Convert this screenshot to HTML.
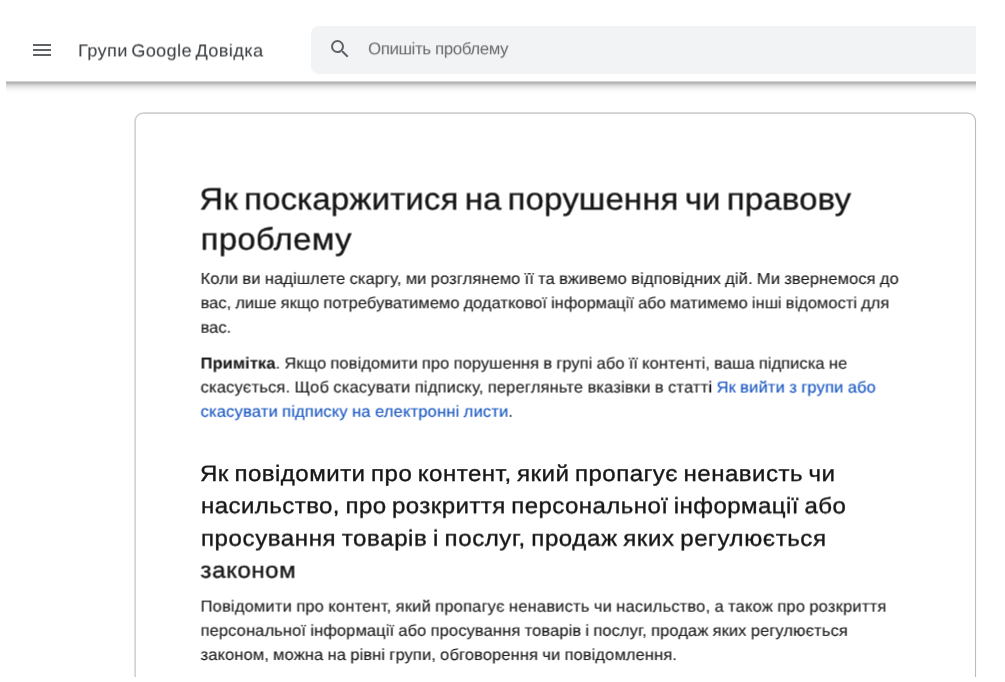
<!doctype html>
<html lang="uk"><head><meta charset="utf-8"><title>Як поскаржитися на порушення чи правову проблему</title>
<style>
html,body{margin:0;padding:0;background:#fff;}
h1,h2,p,header,main,article{margin:0;padding:0;font:inherit;display:block;}
body{width:1005px;height:682px;position:relative;overflow:hidden;font-family:"Liberation Sans", Arial, sans-serif;color:#1f1f1f;}
.l{display:block;position:absolute;white-space:pre;line-height:1;margin:0;padding:0;font-weight:400;will-change:transform;transform-origin:0 50%;text-rendering:geometricPrecision;}
.l a{color:#1857c2;text-decoration:none;}
.l b{font-weight:700;}
.hd{color:#3b3e41;-webkit-text-stroke:0.06px #3b3e41;}
.ph{color:#686a6d;}
.h{color:#161616;-webkit-text-stroke:0.35px #161616;}
.p{color:#1a1a1a;-webkit-text-stroke:0.12px #1a1a1a;}
.p a{-webkit-text-stroke:0.12px #1857c2;}
.shadow{position:absolute;left:6px;top:81px;width:970px;height:12px;background:linear-gradient(to bottom,#d8d8d8 0,#d4d4d4 .5px,#b0b0b0 1.5px,#bfbfbf 2.5px,#cacaca 3.5px,#d9d9d9 4.5px,#e3e3e3 5.5px,#ebebeb 6.5px,#f1f1f1 7.5px,#f6f6f6 8.5px,#f9f9f9 9.5px,#fcfcfc 10.5px,#fefefe 11.5px,#fff 12px);}
.search{position:absolute;left:311px;top:25.5px;width:665px;height:48.3px;background:#f1f3f4;border-radius:8px 0 0 8px;}
.clipb{position:absolute;left:0;top:677px;width:1005px;height:5px;background:#fff;}
svg{position:absolute;}
</style></head>
<body>
<div class="shadow"></div>
<div class="search"></div>
<svg style="left:29.9px;top:37.6px" width="24" height="24" viewBox="0 0 24 24"><path fill="#5f6368" d="M3 18h18v-2H3v2zm0-5h18v-2H3v2zm0-7v2h18V6H3z"/></svg>
<svg style="left:328.1px;top:37.4px" width="24" height="24" viewBox="0 0 24 24"><path fill="#5f6368" d="M15.5 14h-.79l-.28-.27A6.471 6.471 0 0 0 16 9.5 6.5 6.5 0 1 0 9.5 16c1.61 0 3.09-.59 4.23-1.57l.27.28v.79l5 4.99L20.49 19l-4.99-5zm-6 0C7.01 14 5 11.99 5 9.5S7.01 5 9.500 5 14 7.010 14 9.500 11.990 14 9.500 14z"/></svg>
<svg style="left:0;top:0" width="1005" height="682" viewBox="0 0 1005 682" fill="none"><path d="M135.15 678V121.1a8 8 0 0 1 8-8H967.5" stroke="#cfd0d2" stroke-width="1.6"/><path d="M967.5 113.1a8 8 0 0 1 8 8V678" stroke="#bcbcbc" stroke-width="1.1"/></svg>
<div class="clipb"></div>
<header>
<span class="l hd" style="font-size:17.4px;left:78px;top:42px;letter-spacing:0.418px;word-spacing:-2.0px;transform:translate(0.10px,0.45px) rotate(0.01deg) scaleX(1.04)">Групи Google Довідка</span>
<div class="searchbox">
<span class="l ph" style="font-size:16.8px;left:368px;top:41px;letter-spacing:-0.344px;word-spacing:0px;transform:translate(0.10px,0.30px) rotate(0.01deg) scaleX(1.0)">Опишіть проблему</span>
</div>
</header>
<main>
<article>
<h1>
<span class="l h" style="font-size:31.0px;left:199px;top:183px;letter-spacing:0.192px;word-spacing:-3.0px;transform:translate(0.40px,0.48px) rotate(0.01deg) scaleX(1.06)">Як поскаржитися на порушення чи правову</span>
<span class="l h" style="font-size:31.0px;left:200px;top:223px;letter-spacing:0.319px;word-spacing:-3.0px;transform:translate(0.60px,0.63px) rotate(0.01deg) scaleX(1.06)">проблему</span>
</h1>
<p>
<span class="l p" style="font-size:16.0px;left:200px;top:271px;letter-spacing:0.108px;word-spacing:-0.5px;transform:translate(0.60px,0.91px) rotate(0.01deg) scaleX(1.03)">Коли ви надішлете скаргу, ми розглянемо її та вживемо відповідних дій. Ми звернемося до</span>
<span class="l p" style="font-size:16.0px;left:200px;top:296px;letter-spacing:0.012px;word-spacing:-0.5px;transform:translate(0.60px,0.21px) rotate(0.01deg) scaleX(1.03)">вас, лише якщо потребуватимемо додаткової інформації або матимемо інші відомості для</span>
<span class="l p" style="font-size:16.0px;left:200px;top:320px;letter-spacing:0.012px;word-spacing:-0.5px;transform:translate(0.60px,0.71px) rotate(0.01deg) scaleX(1.03)">вас.</span>
</p>
<p>
<span class="l p" style="font-size:16.0px;left:200px;top:356px;letter-spacing:0.077px;word-spacing:-0.5px;transform:translate(0.60px,0.56px) rotate(0.01deg) scaleX(1.03)"><b>Примітка</b>. Якщо повідомити про порушення в групі або її контенті, ваша підписка не</span>
<span class="l p" style="font-size:16.0px;left:200px;top:380px;letter-spacing:0.172px;word-spacing:-0.5px;transform:translate(0.60px,0.46px) rotate(0.01deg) scaleX(1.03)">скасується. Щоб скасувати підписку, перегляньте вказівки в статті <a href="#">Як вийти з групи або</a></span>
<span class="l p" style="font-size:16.0px;left:200px;top:404px;letter-spacing:0.183px;word-spacing:-0.5px;transform:translate(0.60px,0.76px) rotate(0.01deg) scaleX(1.03)"><a href="#">скасувати підписку на електронні листи</a>.</span>
</p>
<h2>
<span class="l h" style="font-size:22.3px;left:200px;top:462px;letter-spacing:0.430px;word-spacing:-1.5px;transform:translate(0.00px,0.98px) rotate(0.01deg) scaleX(1.08)">Як повідомити про контент, який пропагує ненависть чи</span>
<span class="l h" style="font-size:22.3px;left:201px;top:495px;letter-spacing:0.380px;word-spacing:-1.5px;transform:translate(0.00px,0.18px) rotate(0.01deg) scaleX(1.08)">насильство, про розкриття персональної інформації або</span>
<span class="l h" style="font-size:22.3px;left:201px;top:527px;letter-spacing:0.527px;word-spacing:-1.5px;transform:translate(0.00px,0.68px) rotate(0.01deg) scaleX(1.08)">просування товарів і послуг, продаж яких регулюється</span>
<span class="l h" style="font-size:22.3px;left:200px;top:559px;letter-spacing:0.527px;word-spacing:-1.5px;transform:translate(0.50px,0.68px) rotate(0.01deg) scaleX(1.08)">законом</span>
</h2>
<p>
<span class="l p" style="font-size:16.0px;left:200px;top:599px;letter-spacing:0.183px;word-spacing:-0.5px;transform:translate(0.60px,0.61px) rotate(0.01deg) scaleX(1.03)">Повідомити про контент, який пропагує ненависть чи насильство, а також про розкриття</span>
<span class="l p" style="font-size:16.0px;left:200px;top:623px;letter-spacing:0.108px;word-spacing:-0.5px;transform:translate(0.60px,0.81px) rotate(0.01deg) scaleX(1.03)">персональної інформації або просування товарів і послуг, продаж яких регулюється</span>
<span class="l p" style="font-size:16.0px;left:200px;top:648px;letter-spacing:0.114px;word-spacing:-0.5px;transform:translate(0.60px,0.01px) rotate(0.01deg) scaleX(1.03)">законом, можна на рівні групи, обговорення чи повідомлення.</span>
</p>
</article>
</main>
</body></html>
